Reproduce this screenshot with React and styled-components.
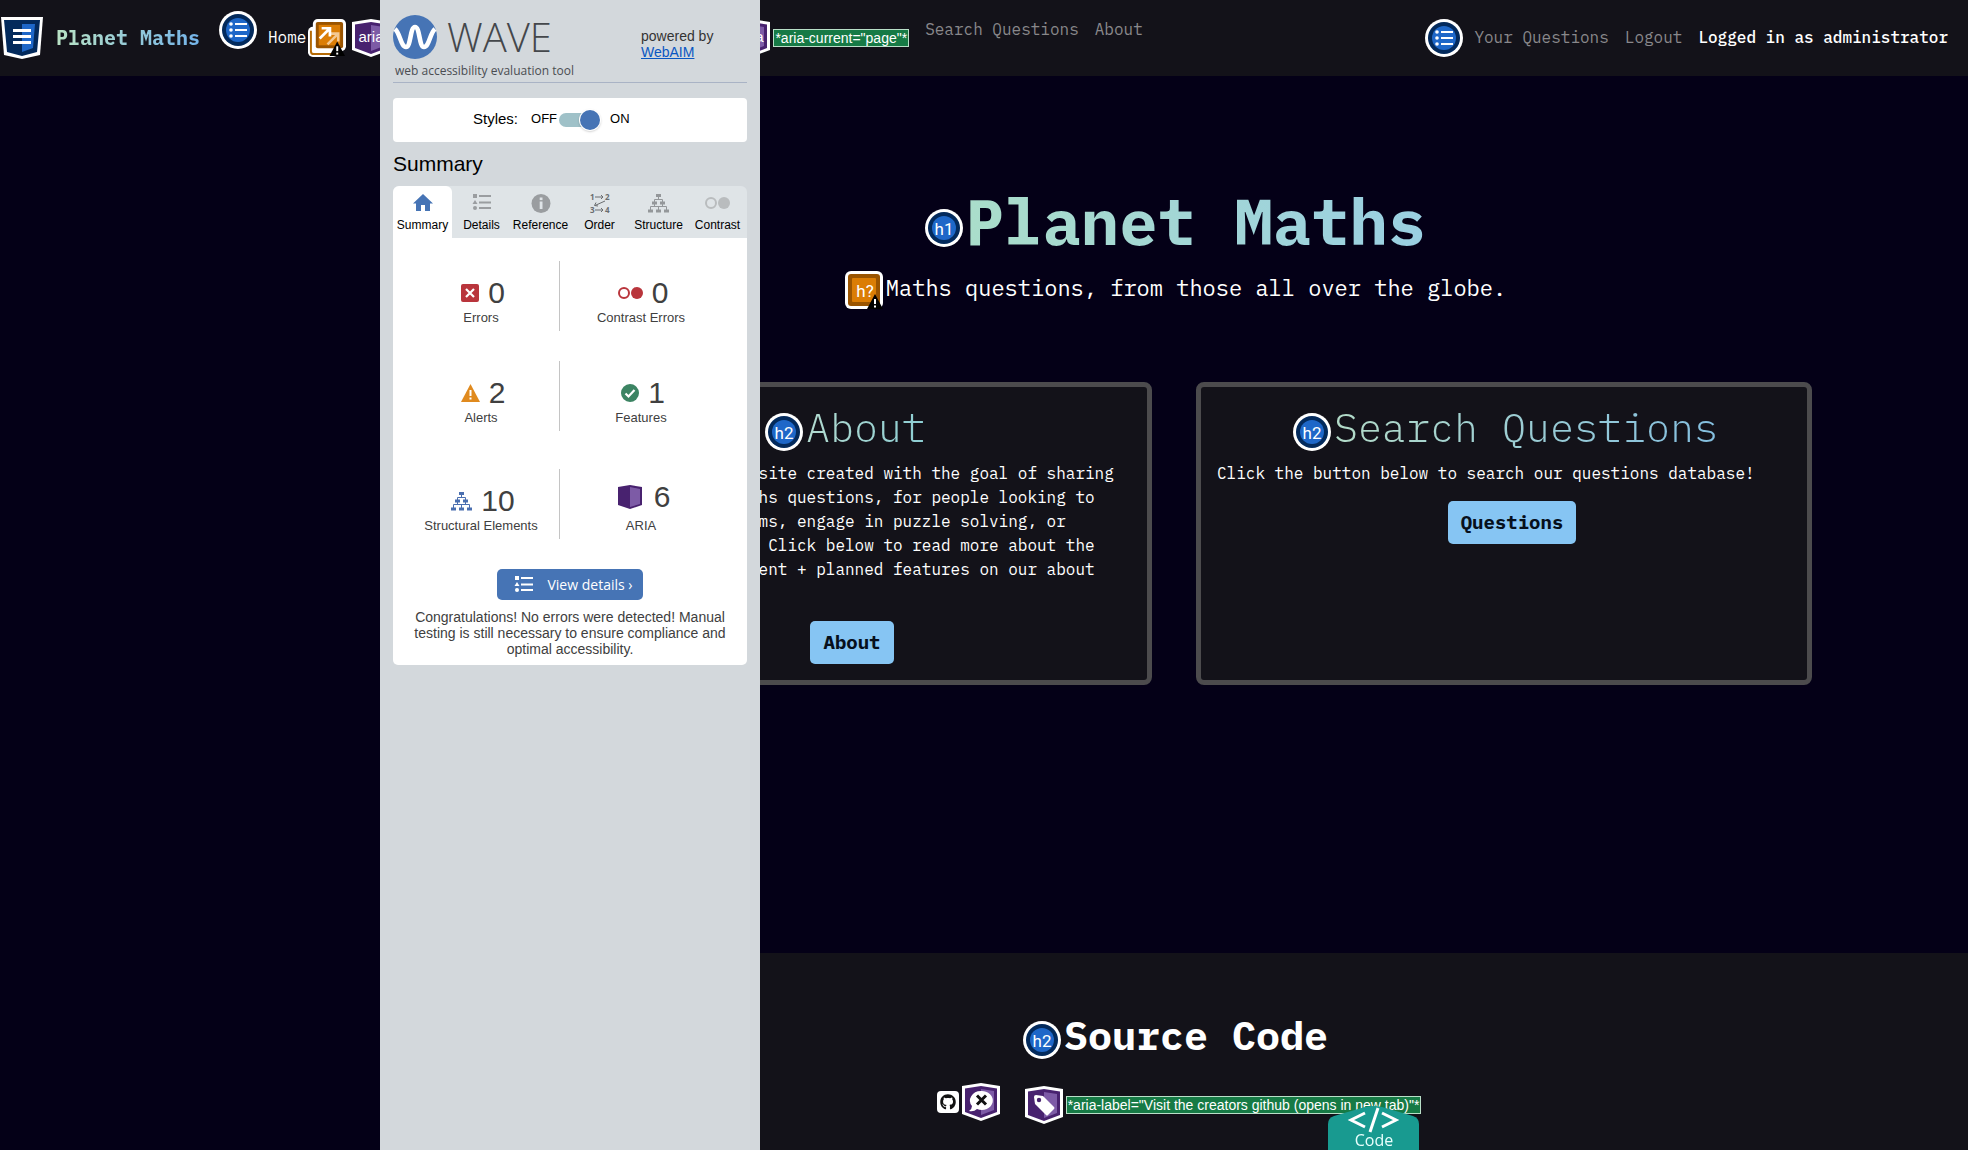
import React, { useState } from "react";
import styled, { createGlobalStyle, css } from "styled-components";
import { FaGithub } from "react-icons/fa";

const mono = `"IBM Plex Mono", "Liberation Mono", monospace`;
const arial = `Arial, "Liberation Sans", sans-serif`;
const humanist = `"Open Sans", "Noto Sans", sans-serif`;

const ink = "#040017";
const surface = "#131219";
const blue = "#4674b5";

const GlobalStyle = createGlobalStyle`
  *, *::before, *::after { box-sizing: border-box; }
  body { margin: 0; background: ${ink}; color: #fff; font: 16px/24px ${mono}; }
  h1, h2, p, ul { margin: 0; padding: 0; }
  ul { list-style: none; }
  button { font: inherit; border: 0; cursor: pointer; }
`;

/* ---------- site ---------- */

const Page = styled.div`
  display: flex;
  flex-direction: column;
  min-height: 100vh;
`;

const Navbar = styled.header`
  display: flex;
  justify-content: space-between;
  align-items: center;
  min-height: 76px;
  padding: 0 20px 0 1px;
  background: ${surface};
`;

const NavLeft = styled.div`
  display: flex;
  align-items: center;
  gap: 19px;
`;

const gradientText = css`
  background: linear-gradient(90deg, ${(p) => p.$from}, ${(p) => p.$to});
  background-clip: text;
  -webkit-background-clip: text;
  color: transparent;
`;

const Brand = styled.a`
  display: flex;
  align-items: center;
  gap: 13px;
  text-decoration: none;
`;

const BrandName = styled.span`
  ${gradientText}
  font-size: 20px;
  line-height: 30px;
  font-weight: 700;
`;

const NavList = styled.ul`
  display: flex;
  align-items: flex-start;
  min-height: 54px;
`;

const NavItem = styled.li`
  display: flex;
  align-items: center;
  height: 38px;
  margin-left: ${(p) => (p.$first ? 11 : 16)}px;
  margin-top: ${(p) => (p.$annotated ? 8 : 0)}px;
`;

const NavLink = styled.a`
  padding-bottom: 2px;
  color: ${(p) => (p.$active ? "#fff" : "#89888b")};
  text-decoration: none;
  white-space: nowrap;
`;

const UserList = styled(NavList)`
  align-items: center;
`;

const UserName = styled.strong`
  padding-bottom: 2px;
  font-weight: 500;
  white-space: nowrap;
  color: #fff;
`;

const NavMarks = styled.span`
  display: flex;
  align-items: center;
  gap: ${(p) => p.$gap}px;
  margin-left: ${(p) => p.$start || 0}px;
`;

const AriaNote = styled.span`
  padding: 0 1px;
  border: 1px solid #b9dfc8;
  background: #167a45;
  color: #fff;
  font: 14px/16px ${arial};
  white-space: nowrap;
`;

const Main = styled.main`
  flex: 1;
  margin-left: 380px;
  padding-top: 107px;
`;

const Badge = styled.svg`
  flex: none;
  display: block;
  width: 38px;
  height: 38px;
`;

const MarkedText = styled.div`
  text-align: center;
  ${Badge} {
    display: inline-block;
    vertical-align: middle;
    margin: 0 3px;
  }
`;

const GradientSpan = styled.span`
  ${gradientText}
`;

const Title = styled(MarkedText)`
  font-size: 64px;
  line-height: 77px;
  font-weight: 700;
`;

const Subtitle = styled(MarkedText)`
  font-size: 22px;
  line-height: 32px;
`;

const Hero = styled.section`
  display: grid;
  gap: 11px;
`;

const Cards = styled.section`
  display: grid;
  grid-template-columns: 1fr 1fr;
  gap: 44px;
  max-width: 1320px;
  margin: 73px auto 0;
  padding: 0 22px;
`;

const Card = styled.article`
  display: flex;
  flex-direction: column;
  gap: 10px;
  padding: 16px;
  border: 5px solid #4c4b4d;
  border-radius: 8px;
  background: ${surface};
`;

const SectionTitle = styled(MarkedText)`
  font-size: 40px;
  line-height: 48px;
  font-weight: ${(p) => (p.$light ? 300 : 700)};
`;

const CardAction = styled.div`
  display: flex;
  justify-content: center;
  padding: 6px 0 0 16px;
`;

const PrimaryButton = styled.button`
  padding: 0 13px;
  border-radius: 5px;
  background: #86c5f3;
  color: #06101c;
  font-size: 19px;
  font-weight: 700;
  line-height: 43px;
`;

const Footer = styled.footer`
  margin-left: 380px;
  padding: 58px 0 26px;
  background: ${surface};
`;

const Group = styled.span`
  display: flex;
  align-items: center;
  gap: 3px;
`;

const SourceLinks = styled.div`
  display: flex;
  justify-content: center;
  align-items: flex-start;
  gap: 25px;
  min-height: 41px;
  margin-top: 24px;
  padding-left: 10px;
  ${Group}:last-child { align-self: flex-end; }
`;

const GithubLink = styled.a`
  display: grid;
  place-items: center;
  width: 22px;
  height: 22px;
  border-radius: 4px;
  background: #fff;
  color: #111;
  font-size: 16px;
`;

/* ---------- evaluation panel ---------- */

const Panel = styled.aside`
  position: fixed;
  top: 0;
  bottom: 0;
  left: 380px;
  width: 380px;
  padding: 15px 13px;
  overflow: auto;
  background: #d3d8dc;
  color: #000;
  font: 14px/16px ${arial};
`;

const PanelHeader = styled.div`
  display: grid;
  grid-template-columns: 1fr 106px;
  padding-bottom: 3px;
  border-bottom: 1px solid #a9b3c5;
`;

const WaveLogo = styled.div`
  display: flex;
  align-items: center;
  gap: 10px;
  color: #44474b;
  font: 300 40px/44px ${humanist};
`;

const Tagline = styled.p`
  margin-top: 4px;
  padding-left: 2px;
  color: #4a4d52;
  font: 12px/16px ${humanist};
`;

const Powered = styled.p`
  padding-top: 13px;
  color: #333;
  a { display: block; color: #0a57c2; }
`;

const StylesBox = styled.div`
  display: flex;
  align-items: center;
  height: 44px;
  margin-top: 15px;
  padding: 0 0 2px 80px;
  border-radius: 4px;
  background: #fff;
  font-size: 13px;
`;

const StylesLabel = styled.label`
  margin-right: 13px;
  font-size: 15px;
`;

const Toggle = styled.input`
  appearance: none;
  display: flex;
  align-items: center;
  justify-content: ${(p) => (p.checked ? "flex-end" : "flex-start")};
  width: 41px;
  height: 14px;
  margin: 1px 10px 0 2px;
  border-radius: 7px;
  background: #9fc1c8;
  cursor: pointer;
  &::before {
    content: "";
    width: 20px;
    height: 20px;
    border-radius: 50%;
    background: ${blue};
    box-shadow: 0 0 0 1px #fff, 0 1px 3px rgba(0, 0, 0, 0.4);
  }
`;

const PanelTitle = styled.h2`
  margin: 10px 0;
  font-size: 21px;
  line-height: 24px;
  font-weight: 400;
`;

const Tabs = styled.div`
  display: grid;
  grid-template-columns: repeat(6, 1fr);
  border-radius: 6px 6px 0 0;
  background: #dfe4e7;
`;

const Tab = styled.button`
  display: flex;
  flex-direction: column;
  align-items: center;
  gap: 5px;
  height: 52px;
  padding: 7px 0 0;
  border-radius: 6px 6px 0 0;
  background: ${(p) => (p["aria-selected"] ? "#fff" : "transparent")};
  color: #000;
  font-size: 12px;
  line-height: 14px;
`;

const Results = styled.div`
  display: flex;
  flex-direction: column;
  align-items: center;
  padding: 23px 0 8px;
  border-radius: 0 0 5px 5px;
  background: #fff;
  color: #404040;
`;

const StatRow = styled.div`
  display: grid;
  grid-template-columns: 1fr 1fr;
  align-self: stretch;
  height: 70px;
  margin-bottom: ${(p) => p.$after}px;
  padding: 0 26px 0 8px;
`;

const Stat = styled.div`
  display: flex;
  flex-direction: column;
  align-items: center;
  font-size: 13px;
  line-height: 15px;
  &:first-child {
    margin-right: 1px;
    padding-left: 2px;
    border-right: 1px solid #c4c4c4;
  }
`;

const StatFigure = styled.div`
  display: flex;
  align-items: center;
  gap: ${(p) => (p.$raised ? 12 : 9)}px;
  padding: ${(p) => (p.$raised ? "11px 0 4px 6px" : "15px 0 0 4px")};
  font-size: 30px;
  line-height: 34px;
`;

const DetailsButton = styled.button`
  display: flex;
  align-items: center;
  gap: 13px;
  height: 31px;
  padding: 0 10px 0 17px;
  border-radius: 5px;
  background: ${blue};
  color: #fff;
  font: 14px/20px ${humanist};
`;

const Verdict = styled.p`
  padding: 9px 20px 0;
  text-align: center;
`;

const CodeTab = styled.button`
  position: fixed;
  right: 549px;
  bottom: 0;
  width: 91px;
  height: 45px;
  padding: 0;
  background: transparent;
  color: #fff;
  svg { display: block; }
  text { font: 16px ${humanist}; }
`;

/* ---------- drawings ---------- */

const BadgeText = styled.text`
  fill: #fff;
  font: 17px Roboto, sans-serif;
  text-anchor: middle;
`;

const Round = ({ children, label }) => (
  <Badge viewBox="0 0 38 38" role="img" aria-label={label}>
    <circle cx="19" cy="19" r="19" fill="#fff" />
    <circle cx="19" cy="19" r="16" fill="#032a5c" />
    <circle cx="19" cy="19" r="12" fill="#1e67c8" />
    {children}
  </Badge>
);

const ListBadge = () => (
  <Round label="Unordered list">
    {[13, 19, 25].map((y) => (
      <g key={y} fill="#fff">
        <circle cx="12" cy={y} r="1.8" />
        <rect x="16" y={y - 1} width="12" height="2" />
      </g>
    ))}
  </Round>
);

const HeadingBadge = ({ level }) => (
  <Round label={`Heading level ${level}`}>
    <BadgeText x="19" y="26">h{level}</BadgeText>
  </Round>
);

const Warn = () => (
  <>
    <path d="M30 23 L38 38 H22 Z" fill="#000" />
    <rect x="29" y="28" width="2" height="5" fill="#fff" />
    <rect x="29" y="34.5" width="2" height="2" fill="#fff" />
  </>
);

const PossibleHeadingBadge = () => (
  <Badge viewBox="0 0 38 38" role="img" aria-label="Possible heading">
    <rect width="38" height="38" rx="6" fill="#fff" />
    <rect x="3" y="3" width="32" height="32" rx="3" fill="#9a5400" />
    <rect x="7" y="7" width="24" height="24" rx="1" fill="#db7d05" />
    <BadgeText x="20" y="26">h?</BadgeText>
    <Warn />
  </Badge>
);

const RedundantLinkBadge = () => (
  <Badge viewBox="0 0 39 39" role="img" aria-label="Redundant link">
    <rect y="8" width="31" height="31" rx="5" fill="#fff" />
    <path d="M3 12 V33 Q3 36 6 36 H28" fill="none" stroke="#b56a05" strokeWidth="2" />
    <rect x="5" width="34" height="33" rx="5" fill="#fff" />
    <rect x="8" y="3" width="28" height="27" rx="2" fill="#9a5400" />
    <rect x="11" y="6" width="22" height="21" fill="#db7d05" />
    <path d="M20 26 L31 15 M23 15 H31 V23" fill="none" stroke="#f3c893" strokeWidth="2.6" />
    <path d="M12 20 L22 10 M14 9.500 H22.500 V18" fill="none" stroke="#fff" strokeWidth="2.8" />
    <Warn />
  </Badge>
);

const AriaShield = ({ children, label }) => (
  <Badge viewBox="0 0 38 38" role="img" aria-label={label}>
    <path d="M0 3 L19 0 L38 3 V31 L19 38 L0 31 Z" fill="#fff" />
    <path d="M3 5.500 L19 3 L35 5.500 V29 L19 35 L3 29 Z" fill="#48226f" />
    <path d="M19 6 L32 8 V27 L19 32 Z" fill="#7d5ba6" />
    {children}
  </Badge>
);

const AriaBadge = () => (
  <AriaShield label="ARIA">
    <text x="19" y="23" textAnchor="middle" fill="#fff" fontFamily='"Liberation Sans", sans-serif' fontSize="15">
      aria
    </text>
  </AriaShield>
);

const HiddenBadge = () => (
  <AriaShield label="ARIA hidden">
    <path d="M19 8 a11 9.500 0 1 1 -4 18 q-3 3 -8 2 q3 -2 3 -5 a11 9.500 0 0 1 9 -15" fill="#fff" />
    <path d="M15 12.500 L24 21.500 M24 12.500 L15 21.500" stroke="#111" strokeWidth="3" />
  </AriaShield>
);

const LabelBadge = () => (
  <AriaShield label="ARIA label">
    <path d="M9 11 Q9 9 11 9 L18 10 L29 21 Q30 22 29 23 L23 29 Q22 30 21 29 L10 18 Z" fill="#fff" />
    <circle cx="14" cy="14" r="2.200" fill="#48226f" />
  </AriaShield>
);

const NavShield = () => (
  <svg width="42" height="42" viewBox="0 0 42 42" role="img" aria-label="Navigation">
    <path d="M0 0 H42 L39 38 L21 42 L3 38 Z" fill="#fff" />
    <path d="M3 3 H39 L36 35 L21 39 L6 35 Z" fill="#032a5c" />
    <path d="M21 7 H34 L32 31 L21 35 Z" fill="#1e67c8" />
    <path d="M12 13.500 H30 M12 19.500 H30 M12 25.500 H30" stroke="#fff" strokeWidth="3" />
  </svg>
);

const WaveMark = () => (
  <svg width="44" height="44" viewBox="0 0 44 44" aria-hidden="true">
    <circle cx="22" cy="22" r="22" fill={blue} />
    <path
      d="M2 14 C7 18 8 32 13 32 C18 32 17 12 22 12 C27 12 26 32 31 32 C36 32 37 18 42 14"
      fill="none" stroke="#fff" strokeWidth="4.600"
    />
  </svg>
);

const HomeIcon = () => (
  <svg width="20" height="20" viewBox="0 0 20 20" aria-hidden="true">
    <path d="M10 1 L20 10.500 H17 V18 H12 V12 H8 V18 H3 V10.500 H0 Z" fill={blue} />
  </svg>
);

const DetailsIcon = ({ color = "#9a9da0" }) => (
  <svg width="20" height="20" viewBox="0 0 20 20" fill={color} aria-hidden="true">
    <rect x="1" y="1" width="4" height="4" />
    <path d="M3 7 L5.500 11 H0.500 Z" />
    <circle cx="3" cy="15" r="2" />
    <path d="M7 2 H19 V4 H7 Z M7 8.500 H19 V10.500 H7 Z M7 14 H19 V16 H7 Z" />
  </svg>
);

const InfoIcon = () => (
  <svg width="20" height="20" viewBox="0 0 20 20" aria-hidden="true">
    <circle cx="10" cy="10.500" r="9.500" fill="#9a9da0" />
    <rect x="8.700" y="4.500" width="2.800" height="2.600" fill="#dfe4e7" />
    <rect x="8.700" y="8.500" width="2.800" height="7.500" fill="#dfe4e7" />
  </svg>
);

const OrderSvg = styled.svg`
  overflow: visible;
  text { font: 700 8px ${humanist}; fill: #6a6d70; }
`;

const OrderIcon = () => (
  <OrderSvg width="20" height="20" viewBox="0 0 20 20" aria-hidden="true">
    <text x="0" y="7">1</text>
    <text x="15" y="7">2</text>
    <text x="0" y="20">3</text>
    <text x="15" y="20">4</text>
    <path
      d="M5 4 H13 M11 2 L13 4 L11 6 M5 17 H13 M11 15 L13 17 L11 19 M15 8 L5 12.500 M6 9.500 L4.500 12.500 L8 13"
      fill="none" stroke="#6a6d70"
    />
  </OrderSvg>
);

const TreeIcon = ({ color = "#94979a" }) => (
  <svg width="21" height="20" viewBox="0 0 21 20" aria-hidden="true">
    <path
      d="M10.500 3 V7 M6.500 10 V6.500 H14.500 V10 M6.500 10 V13.500 M14.500 10 V13.500 M2.500 17 V13.500 H18.500 V17 M10.500 13.500 V17"
      fill="none" stroke={color}
    />
    <path
      d="M8 1 H13 V4 H8 Z M4 8.500 H9 V11.500 H4 Z M12 8.500 H17 V11.500 H12 Z M0 16.500 H5 V19.500 H0 Z M8 16.500 H13 V19.500 H8 Z M16 16.500 H21 V19.500 H16 Z"
      fill={color}
    />
  </svg>
);

const ContrastIcon = ({ color = "#b9bcbe" }) => (
  <svg width="25" height="20" viewBox="0 0 25 20" aria-hidden="true">
    <circle cx="6" cy="10" r="5" fill="none" stroke={color} strokeWidth="2" />
    <circle cx="19" cy="10" r="6" fill={color} />
  </svg>
);

const ErrorIcon = () => (
  <svg width="18" height="18" viewBox="0 0 18 18" aria-hidden="true">
    <rect width="18" height="18" rx="2" fill="#b9353c" />
    <path d="M5 5 L13 13 M13 5 L5 13" stroke="#fff" strokeWidth="2.200" />
  </svg>
);

const AlertIcon = () => (
  <svg width="19" height="18" viewBox="0 0 19 18" aria-hidden="true">
    <path d="M9.500 0 L19 18 H0 Z" fill="#e08a1e" />
    <path d="M8.500 6 H10.500 V12 H8.500 Z M8.500 13.500 H10.500 V15.500 H8.500 Z" fill="#fff" />
  </svg>
);

const FeatureIcon = () => (
  <svg width="18" height="18" viewBox="0 0 18 18" aria-hidden="true">
    <circle cx="9" cy="9" r="9" fill="#3c8463" />
    <path d="M4.500 9.500 L7.500 12.500 L13.500 6" fill="none" stroke="#fff" strokeWidth="2.200" />
  </svg>
);

const AriaIcon = () => (
  <svg width="24" height="24" viewBox="0 0 24 24" aria-hidden="true">
    <path d="M0 2 L12 0 L24 2 V20 L12 24 L0 20 Z" fill="#48226f" />
    <path d="M12 2 L22 4 V19 L12 22 Z" fill="#7d5ba6" />
  </svg>
);

const tabs = [
  ["Summary", HomeIcon],
  ["Details", DetailsIcon],
  ["Reference", InfoIcon],
  ["Order", OrderIcon],
  ["Structure", TreeIcon],
  ["Contrast", ContrastIcon],
];

const Figure = ({ icon, value, label, raised }) => (
  <Stat>
    <StatFigure $raised={raised}>
      {icon}
      <span>{value}</span>
    </StatFigure>
    <span>{label}</span>
  </Stat>
);

function WavePanel() {
  const [on, setOn] = useState(true);
  const [tab, setTab] = useState("Summary");
  return (
    <Panel>
      <PanelHeader>
        <div>
          <WaveLogo>
            <WaveMark />
            <span>WAVE</span>
          </WaveLogo>
          <Tagline>web accessibility evaluation tool</Tagline>
        </div>
        <Powered>
          powered by <a href="#webaim">WebAIM</a>
        </Powered>
      </PanelHeader>
      <StylesBox>
        <StylesLabel htmlFor="styles">Styles:</StylesLabel>
        <span>OFF</span>
        <Toggle id="styles" type="checkbox" checked={on} onChange={(e) => setOn(e.target.checked)} />
        <span>ON</span>
      </StylesBox>
      <PanelTitle>Summary</PanelTitle>
      <Tabs role="tablist">
        {tabs.map(([name, Icon]) => (
          <Tab key={name} role="tab" aria-selected={tab === name} onClick={() => setTab(name)}>
            <Icon />
            {name}
          </Tab>
        ))}
      </Tabs>
      <Results>
        <StatRow $after={30}>
          <Figure icon={<ErrorIcon />} value="0" label="Errors" />
          <Figure icon={<ContrastIcon color="#b9353c" />} value="0" label="Contrast Errors" />
        </StatRow>
        <StatRow $after={38}>
          <Figure icon={<AlertIcon />} value="2" label="Alerts" />
          <Figure icon={<FeatureIcon />} value="1" label="Features" />
        </StatRow>
        <StatRow $after={30}>
          <Figure icon={<TreeIcon color="#4a6fb0" />} value="10" label="Structural Elements" />
          <Figure icon={<AriaIcon />} value="6" label="ARIA" raised />
        </StatRow>
        <DetailsButton>
          <DetailsIcon color="#fff" />
          View details ›
        </DetailsButton>
        <Verdict>
          Congratulations! No errors were detected! Manual testing is still necessary to ensure
          compliance and optimal accessibility.
        </Verdict>
      </Results>
    </Panel>
  );
}

export default function App() {
  return (
    <>
      <GlobalStyle />
      <Page>
        <Navbar>
          <NavLeft>
            <Brand href="#home">
              <NavShield />
              <BrandName $from="#b9e2c4" $to="#74b4ea">Planet Maths</BrandName>
            </Brand>
            <NavList>
              <li><ListBadge /></li>
              <NavItem $first $annotated>
                <NavLink href="#home" $active>Home</NavLink>
                <NavMarks $gap={6} $start={2}>
                  <RedundantLinkBadge />
                  <AriaBadge />
                </NavMarks>
                <NavMarks $gap={3} $start={342}>
                  <AriaBadge />
                  <AriaNote>*aria-current="page"*</AriaNote>
                </NavMarks>
              </NavItem>
              <NavItem><NavLink href="#questions">Search Questions</NavLink></NavItem>
              <NavItem><NavLink href="#about">About</NavLink></NavItem>
            </NavList>
          </NavLeft>
          <UserList>
            <li><ListBadge /></li>
            <NavItem $first><NavLink href="#mine">Your Questions</NavLink></NavItem>
            <NavItem><NavLink href="#logout">Logout</NavLink></NavItem>
            <NavItem><UserName>Logged in as administrator</UserName></NavItem>
          </UserList>
        </Navbar>

        <Main>
          <Hero>
            <Title as="h1">
              <HeadingBadge level={1} />
              <GradientSpan $from="#aaddca" $to="#9acfe2">Planet Maths</GradientSpan>
            </Title>
            <Subtitle as="p">
              <PossibleHeadingBadge />
              Maths questions, from those all over the globe.
            </Subtitle>
          </Hero>
          <Cards>
            <Card>
              <SectionTitle as="h2" $light>
                <HeadingBadge level={2} />
                <GradientSpan $from="#b3dbd0" $to="#8ccdd3">About</GradientSpan>
              </SectionTitle>
              <p>
                Planet Maths is a website created with the goal of sharing free and engaging maths
                questions, for people looking to prepare for maths exams, engage in puzzle solving,
                or simply have some fun. Click below to read more about the website, its development
                + planned features on our about page.
              </p>
              <CardAction><PrimaryButton>About</PrimaryButton></CardAction>
            </Card>
            <Card>
              <SectionTitle as="h2" $light>
                <HeadingBadge level={2} />
                <GradientSpan $from="#b3dbc8" $to="#84bfe0">Search Questions</GradientSpan>
              </SectionTitle>
              <p>Click the button below to search our questions database!</p>
              <CardAction><PrimaryButton>Questions</PrimaryButton></CardAction>
            </Card>
          </Cards>
        </Main>

        <Footer>
          <SectionTitle as="h2">
            <HeadingBadge level={2} />
            Source Code
          </SectionTitle>
          <SourceLinks>
            <Group>
              <GithubLink href="#github" aria-label="Visit the creators github (opens in new tab)">
                <FaGithub />
              </GithubLink>
              <HiddenBadge />
            </Group>
            <Group>
              <LabelBadge />
              <AriaNote>*aria-label="Visit the creators github (opens in new tab)"*</AriaNote>
            </Group>
          </SourceLinks>
        </Footer>
      </Page>
      <WavePanel />
      <CodeTab>
        <svg width="91" height="45" viewBox="0 0 91 45">
          <path d="M0 19 Q0 13 6 11 L37 2 Q45 0 54 2 L85 11 Q91 13 91 19 V45 H0 Z" fill="#189a90" />
          <path d="M37 8 L23 15 L37 22 M54 8 L68 15 L54 22 M50 3 L42 27" fill="none" stroke="#fff" strokeWidth="3" />
          <text x="46" y="41" textAnchor="middle" fill="#e8fffc">Code</text>
        </svg>
      </CodeTab>
    </>
  );
}
